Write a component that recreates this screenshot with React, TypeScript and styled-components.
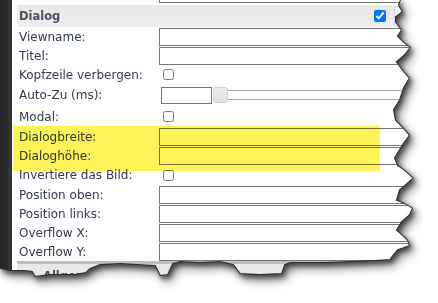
import React from "react";
import styled, { createGlobalStyle } from "styled-components";

const GlobalStyle = createGlobalStyle`
  html, body { margin: 0; padding: 0; background: #ffffff; }
  body { font-family: "DejaVu Sans", Verdana, sans-serif; }
`;

const EDGE: [number, number][] = [
  [401, 0], [399, 5], [403, 12], [396, 17], [396, 22], [402, 30], [398, 36],
  [404, 42], [411, 47], [405, 55], [397, 62], [403, 70], [410, 78], [404, 88],
  [400, 100], [394, 110], [396, 120], [404, 128], [410, 135], [403, 145],
  [395, 158], [398, 165], [405, 170], [414, 178], [406, 185], [400, 190],
  [397, 200], [405, 203], [413, 208], [410, 215], [402, 222], [397, 230],
  [404, 236], [408, 240], [410, 246], [398, 250], [393, 256], [390, 260],
  [375, 261], [350, 262], [325, 263], [290, 263], [285, 265], [282, 274],
  [260, 275], [240, 274], [233, 265], [220, 262], [200, 263], [180, 262],
  [173, 264], [168, 275], [160, 276], [155, 266], [120, 264], [100, 265],
  [90, 269], [86, 273], [75, 275], [50, 275], [42, 276], [35, 277],
  [32, 272], [25, 271], [12, 271], [0, 269],
];

const CLIP = `polygon(0px 0px, ${EDGE.map(([x, y]) => `${x}px ${y}px`).join(", ")})`;
const EDGE_POINTS = EDGE.map(([x, y]) => `${x},${y}`).join(" ");

const Shadow = styled.div`
  width: 430px;
  height: 295px;
  filter: drop-shadow(2px 3px 2px rgba(0, 0, 0, 0.45)) drop-shadow(3px 4px 4px rgba(0, 0, 0, 0.55));
`;

const Paper = styled.div`
  position: relative;
  width: 420px;
  height: 285px;
  display: flex;
  background: #ffffff;
  clip-path: ${CLIP};
`;

const Strip = styled.div`
  width: 12px;
  flex: none;
  background: linear-gradient(90deg, #262626 0, #2c2c2c 8px, #3a3a3a 10px, #2e2e2e 12px);
`;

const Panel = styled.div`
  flex: 1;
  padding-left: 5px;
  display: flex;
  flex-direction: column;
  color: #313a50;
  font-size: 12px;
`;

const PrevTail = styled.div`
  height: 2px;
  margin-left: 142px;
  border: 1px solid #777;
  border-top: none;
  margin-bottom: 2px;
`;

const SectionHeader = styled.div<{ $h: number; $indent: number }>`
  height: ${(p) => p.$h}px;
  flex: none;
  display: flex;
  align-items: center;
  padding-left: ${(p) => p.$indent}px;
  background: linear-gradient(#e8e8e8, #eeeeee);
  font-weight: bold;
  font-size: 11.5px;
  color: #4b5060;
`;

const NextHeader = styled(SectionHeader)`
  border-top: 3px solid #bdbdbd;
  align-items: flex-start;
  padding-top: 5px;
  box-sizing: border-box;
`;

const Title = styled.span`
  flex: 1;
`;

const HeadCheck = styled.input`
  width: 12px;
  height: 12px;
  margin: 0 8px 0 0;
`;

const CollapseBtn = styled.div`
  width: 13px;
  height: 19px;
  margin-right: 11px;
  border: 1px solid #d6d6d6;
  border-radius: 2px;
  background: #f4f4f4;
  color: #999;
  font-size: 7px;
  line-height: 12px;
  text-align: center;
`;

const Row = styled.div<{ $h: number }>`
  height: ${(p) => p.$h}px;
  flex: none;
  display: flex;
  align-items: center;
`;

const Label = styled.div`
  width: 140px;
  padding-left: 2px;
  flex: none;
  white-space: nowrap;
`;

const TextInput = styled.div`
  flex: 1;
  height: 18px;
  box-sizing: border-box;
  border: 1px solid #767676;
  background: #fff;
`;

const ShortInput = styled.div`
  width: 51px;
  height: 17px;
  margin-left: 2px;
  box-sizing: border-box;
  border: 1px solid #767676;
  background: #fff;
  flex: none;
`;

const Handle = styled.div`
  width: 15px;
  height: 16px;
  margin-left: 1px;
  box-sizing: border-box;
  border: 1px solid #d0d0d0;
  border-radius: 3px;
  background: linear-gradient(#ededed, #e2e2e2);
  flex: none;
`;

const Track = styled.div`
  flex: 1;
  height: 10px;
  box-sizing: border-box;
  border-top: 1px solid #a8a8a8;
  border-bottom: 1px solid #a8a8a8;
  background: #fff;
`;

const Box = styled.input`
  width: 11px;
  height: 11px;
  margin: 0 0 0 4px;
  accent-color: #0075ff;
`;

const Highlight = styled.div`
  position: absolute;
  left: 13px;
  top: 126px;
  width: 367px;
  height: 45px;
  background: #fff35a;
  mix-blend-mode: multiply;
  pointer-events: none;
`;

const EdgeLine = styled.svg`
  position: absolute;
  left: 0;
  top: 0;
  pointer-events: none;
`;

type Field = { label: string; kind: "text" | "check" | "slider"; h?: number };

const FIELDS: Field[] = [
  { label: "Viewname:", kind: "text" },
  { label: "Titel:", kind: "text" },
  { label: "Kopfzeile verbergen:", kind: "check" },
  { label: "Auto-Zu (ms):", kind: "slider", h: 22 },
  { label: "Modal:", kind: "check", h: 21 },
  { label: "Dialogbreite:", kind: "text" },
  { label: "Dialoghöhe:", kind: "text" },
  { label: "Invertiere das Bild:", kind: "check", h: 20 },
  { label: "Position oben:", kind: "text" },
  { label: "Position links:", kind: "text" },
  { label: "Overflow X:", kind: "text" },
  { label: "Overflow Y:", kind: "text" },
];

export default function App() {
  return (
    <>
      <GlobalStyle />
      <Shadow>
        <Paper>
          <Strip />
          <Panel>
            <PrevTail />
            <SectionHeader $h={22} $indent={2}>
              <Title>Dialog</Title>
              <HeadCheck type="checkbox" defaultChecked />
              <CollapseBtn>▲</CollapseBtn>
            </SectionHeader>
            {FIELDS.map((f) => (
              <Row key={f.label} $h={f.h ?? 19}>
                <Label>{f.label}</Label>
                {f.kind === "text" && <TextInput />}
                {f.kind === "check" && <Box type="checkbox" />}
                {f.kind === "slider" && (
                  <>
                    <ShortInput />
                    <Handle />
                    <Track />
                  </>
                )}
              </Row>
            ))}
            <NextHeader $h={24} $indent={26}>
              <Title>Allgemein</Title>
            </NextHeader>
          </Panel>
          <Highlight />
          <EdgeLine width="420" height="285" viewBox="0 0 420 285">
            <polyline points={EDGE_POINTS} fill="none" stroke="#2e2e2e" strokeWidth="2" />
          </EdgeLine>
        </Paper>
      </Shadow>
    </>
  );
}
